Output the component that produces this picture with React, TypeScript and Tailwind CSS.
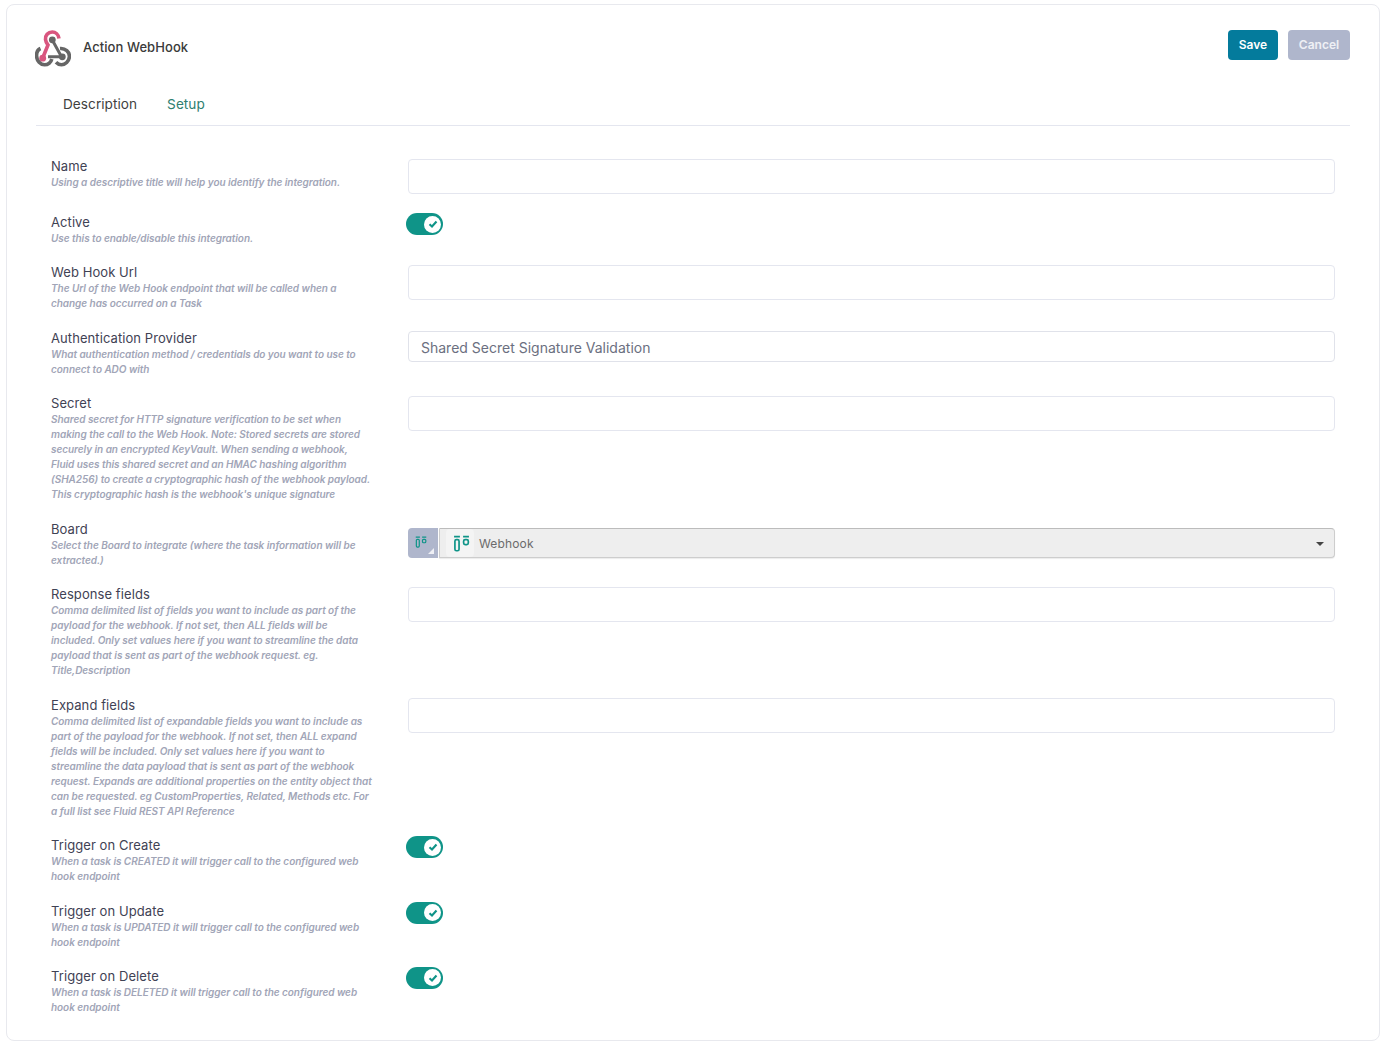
const LABEL = "mb-px text-[13px] leading-[15px] tracking-[0.08px] text-[#3f4254]";
const HINT = "text-[10px] leading-[15px] italic font-semibold tracking-[-0.05px] text-[#a1a5b7]";

function WebhookLogo() {
  return (
    <svg width="36" height="37" viewBox="0 0 36 37" fill="none" className="shrink-0">
      <path d="M24 8.5 C23.5 4.5 20.5 2 17.3 2 C13 2 10 5.5 10.5 9.5 C10.8 12 12 13.5 13 15 L7.7 28" stroke="#d9567f" strokeWidth="3.6" />
      <circle cx="7.7" cy="28.2" r="3.4" fill="#d9567f" />
      <path d="M17.3 10 L26.5 26.8 H13" stroke="#666666" strokeWidth="3" />
      <circle cx="17.3" cy="9.8" r="3.4" fill="#666666" />
      <circle cx="27.3" cy="26.8" r="3.4" fill="#666666" />
      <path d="M5.5 18.5 C2 20 1.5 24 1.6 26 C1.8 31 5.5 34.8 9.5 34.8 C13 34.8 16 32.5 16.8 29" stroke="#666666" strokeWidth="3.6" />
      <path d="M25 18.5 C30.5 18 34.5 22 34.4 26.5 C34.2 31.5 30 34.8 26.5 34.8 C24.5 34.8 22.5 33.8 21 32.2" stroke="#666666" strokeWidth="3.6" />
    </svg>
  );
}

function BoardIcon({ size }: { size: number }) {
  return (
    <svg width={size} height={size} viewBox="0 0 16 16" fill="none">
      <path d="M1 1.5 H6.5 M9.5 1.5 H15" stroke="#0f9488" strokeWidth="1.6" />
      <rect x="1.8" y="4.4" width="3.9" height="10.4" rx="1.4" stroke="#0f9488" strokeWidth="1.6" />
      <rect x="10" y="4.4" width="4.4" height="4.6" rx="1.4" stroke="#0f9488" strokeWidth="1.6" />
    </svg>
  );
}

function Toggle() {
  return (
    <div className="-mt-0.5 -ml-0.5 flex h-[22px] w-[37px] items-center justify-end rounded-full bg-[#0f9488] pr-[2px]">
      <div className="flex size-[17px] items-center justify-center rounded-full bg-white">
        <svg width="10" height="10" viewBox="0 0 10 10" fill="none">
          <path d="M1.5 5.2 L4 7.5 L8.5 2.5" stroke="#0f9488" strokeWidth="2.1" />
        </svg>
      </div>
    </div>
  );
}

function TextBox() {
  return <div className="h-[35px] rounded border border-[#e4e6ef] bg-white" />;
}

function Row({ label, hint, minH, children }: { label: string; hint: string[]; minH?: string; children?: React.ReactNode }) {
  return (
    <div className={`flex pb-[19.45px] ${minH ?? ""}`}>
      <div className="w-[357px] shrink-0">
        <div className={LABEL}>{label}</div>
        {hint.map((line) => (
          <div key={line} className={`${HINT} whitespace-nowrap`}>{line}</div>
        ))}
      </div>
      <div className="min-w-0 flex-1">{children}</div>
    </div>
  );
}

export default function App() {
  return (
    <div className="h-[1049px] bg-white pt-1 pr-[7px] pb-2 pl-1.5 font-['Inter',sans-serif]">
      <div className="h-full rounded-lg border border-[#e8e9ee] bg-white pt-[25px] pr-[29px] pl-[28px]">
        <div className="flex h-[36px] items-center justify-between">
          <div className="flex items-center">
            <WebhookLogo />
            <span className="ml-[12px] text-[13px] font-medium tracking-[0.07px] text-[#3a3a3a]">Action WebHook</span>
          </div>
          <div className="-mt-1.5 flex gap-[10px]">
            <button className="h-[30px] w-[50px] rounded bg-[#047b9c] text-xs font-semibold text-white">Save</button>
            <button className="h-[30px] w-[62px] rounded bg-[#afb6cc] text-xs font-semibold text-white/80">Cancel</button>
          </div>
        </div>

        <div className="mt-[17px] ml-px flex h-[43px] items-center gap-[30px] border-b border-[#e4e6ef] pl-[27px] text-[13.6px] tracking-[0.05px]">
          <span className="text-[#3f3f3f]">Description</span>
          <span className="text-[#2f7f70]">Setup</span>
        </div>

        <div className="pt-[33px] pr-[15px] pl-[16px]">
          <Row label="Name" hint={["Using a descriptive title will help you identify the integration."]} minH="min-h-[56px]">
            <TextBox />
          </Row>
          <Row label="Active" hint={["Use this to enable/disable this integration."]}>
            <Toggle />
          </Row>
          <Row label="Web Hook Url" hint={["The Url of the Web Hook endpoint that will be called when a", "change has occurred on a Task"]}>
            <TextBox />
          </Row>
          <Row label="Authentication Provider" hint={["What authentication method / credentials do you want to use to", "connect to ADO with"]}>
            <div className="h-[31px] rounded border border-[#e0e2ea] bg-white pt-[7px] pl-3">
              <div className="h-[17px] overflow-hidden text-sm leading-[18px] text-[#6b6f80]">
                Shared Secret Signature Validation
              </div>
            </div>
          </Row>
          <Row
            label="Secret"
            hint={[
              "Shared secret for HTTP signature verification to be set when",
              "making the call to the Web Hook. Note: Stored secrets are stored",
              "securely in an encrypted KeyVault. When sending a webhook,",
              "Fluid uses this shared secret and an HMAC hashing algorithm",
              "(SHA256) to create a cryptographic hash of the webhook payload.",
              "This cryptographic hash is the webhook's unique signature",
            ]}
          >
            <TextBox />
          </Row>
          <Row label="Board" hint={["Select the Board to integrate (where the task information will be", "extracted.)"]}>
            <div className="mt-[6px] flex h-[30px]">
              <div className="relative flex w-[30px] items-center justify-center rounded-l bg-[#afb6cc] pr-1 pb-0.5">
                <BoardIcon size={12} />
                <div className="absolute right-1 bottom-1 size-0 border-b-[6px] border-l-[6px] border-b-white/80 border-l-transparent" />
              </div>
              <div className="ml-px flex flex-1 items-center justify-between rounded-r border border-[#cdcdcd] border-t-[#bcbcbc] bg-[#eeeeee] pt-px pr-[10px] pl-[6px] shadow-[0_1px_1px_rgba(0,0,0,0.08)]">
                <div className="flex items-center">
                  <div className="flex size-[28px] items-center justify-center rounded bg-[#f4f4f4] pl-[3px]">
                    <BoardIcon size={17} />
                  </div>
                  <span className="mt-px ml-[5px] text-xs tracking-[0.15px] text-[#6b6b6b]">Webhook</span>
                </div>
                <div className="mt-0.5 size-0 border-x-4 border-t-4 border-x-transparent border-t-[#444444]" />
              </div>
            </div>
          </Row>
          <Row
            label="Response fields"
            hint={[
              "Comma delimited list of fields you want to include as part of the",
              "payload for the webhook. If not set, then ALL fields will be",
              "included. Only set values here if you want to streamline the data",
              "payload that is sent as part of the webhook request. eg.",
              "Title,Description",
            ]}
          >
            <TextBox />
          </Row>
          <Row
            label="Expand fields"
            hint={[
              "Comma delimited list of expandable fields you want to include as",
              "part of the payload for the webhook. If not set, then ALL expand",
              "fields will be included. Only set values here if you want to",
              "streamline the data payload that is sent as part of the webhook",
              "request. Expands are additional properties on the entity object that",
              "can be requested. eg CustomProperties, Related, Methods etc. For",
              "a full list see Fluid REST API Reference",
            ]}
          >
            <TextBox />
          </Row>
          <Row label="Trigger on Create" hint={["When a task is CREATED it will trigger call to the configured web", "hook endpoint"]}>
            <Toggle />
          </Row>
          <Row label="Trigger on Update" hint={["When a task is UPDATED it will trigger call to the configured web", "hook endpoint"]}>
            <Toggle />
          </Row>
          <Row label="Trigger on Delete" hint={["When a task is DELETED it will trigger call to the configured web", "hook endpoint"]}>
            <Toggle />
          </Row>
        </div>
      </div>
    </div>
  );
}
